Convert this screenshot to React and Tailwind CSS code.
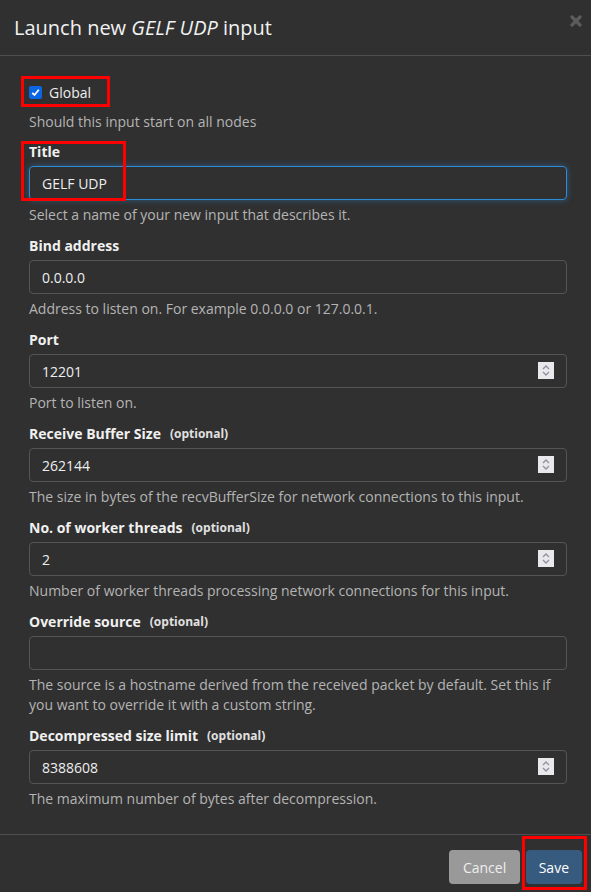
import React from "react"

const fields = [
  { label: "Bind address", value: "0.0.0.0", help: "Address to listen on. For example 0.0.0.0 or 127.0.0.1." },
  { label: "Port", value: "12201", spin: true, help: "Port to listen on." },
  {
    label: "Receive Buffer Size",
    optional: true,
    value: "262144",
    spin: true,
    help: "The size in bytes of the recvBufferSize for network connections to this input.",
  },
  {
    label: "No. of worker threads",
    optional: true,
    value: "2",
    spin: true,
    help: "Number of worker threads processing network connections for this input.",
  },
  {
    label: "Override source",
    optional: true,
    value: "",
    help: "The source is a hostname derived from the received packet by default. Set this if you want to override it with a custom string.",
  },
  {
    label: "Decompressed size limit",
    optional: true,
    value: "8388608",
    spin: true,
    help: "The maximum number of bytes after decompression.",
  },
]

const Spinner = () => (
  <span className="absolute right-[13px] top-[8px] flex h-[17px] w-[16px] items-center justify-center bg-[#e9e9ed]">
    <svg width="10" height="13" viewBox="0 0 10 13" fill="none" stroke="#8f8f9d" strokeWidth="1.3">
      <path d="M2 5 L5 2 L8 5" />
      <path d="M2 8 L5 11 L8 8" />
    </svg>
  </span>
)

const Field = ({ label, optional, value, spin, help, focused }) => (
  <div className="mb-[11px]">
    <div className="mb-[4px] flex items-center text-[14px] font-bold leading-[20px] text-[#f0f0f0]">
      {label}
      {optional && <span className="ml-[9px] text-[12px] font-bold text-[#e0e0e0]">(optional)</span>}
    </div>
    <div className="relative">
      <div
        className={
          focused
            ? "flex h-[34px] items-center rounded-[4px] border border-[#2e8bd6] px-[12px] text-[14px] text-[#eee] shadow-[0_0_6px_rgba(46,139,214,0.5)]"
            : "flex h-[34px] items-center rounded-[4px] border border-[#555] px-[12px] text-[14px] text-[#eee]"
        }
      >
        {value}
      </div>
      {spin && <Spinner />}
    </div>
    <p className="mt-[5px] text-[14px] leading-[20px] text-[#b4b4b4]">{help}</p>
  </div>
)

export default function App() {
  return (
    <div className="relative min-h-[892px] bg-[#303030] font-['Open_Sans',sans-serif]">
      <div className="flex h-[56px] items-center justify-between border-b border-[#4f4f4f] pl-[14px] pr-[9px]">
        <h1 className="text-[20px] leading-[28px] text-[#f2f2f2]">
          Launch new <em>GELF UDP</em> input
        </h1>
        <svg className="-mt-[13px]" width="12" height="12" viewBox="0 0 12 12" stroke="#5c5c5c" strokeWidth="3.2" strokeLinecap="round">
          <path d="M2 2 L10 10 M10 2 L2 10" />
        </svg>
      </div>

      <div className="pl-[29px] pr-[24px] pt-[26px] pb-[14px]">
        <label className="flex h-[20px] items-center gap-[7px] text-[14px] text-[#eee]">
          <span className="flex h-[13px] w-[13px] items-center justify-center rounded-[2px] bg-[#0b66e4]">
            <svg width="9" height="9" viewBox="0 0 9 9" fill="none" stroke="white" strokeWidth="1.8">
              <path d="M1.2 4.8 L3.5 7 L7.8 1.8" />
            </svg>
          </span>
          Global
        </label>
        <p className="mb-[10px] mt-[10px] text-[14px] leading-[20px] text-[#b4b4b4]">Should this input start on all nodes</p>

        <Field label="Title" value="GELF UDP" focused help="Select a name of your new input that describes it." />
        {fields.map((f) => (
          <Field key={f.label} {...f} />
        ))}
      </div>

      <div className="flex justify-end gap-[6px] border-t border-[#4f4f4f] pb-[15px] pr-[9px] pt-[15px]">
        <button className="h-[34px] rounded-[4px] bg-[#999] px-[13.5px] text-[14px] text-[#eee]">Cancel</button>
        <button className="h-[34px] rounded-[4px] bg-[#375a7f] px-[13px] text-[14px] text-white">Save</button>
      </div>

      <div className="pointer-events-none absolute left-[21px] top-[76px] h-[31px] w-[89px] border-[3px] border-[#ff0000]" />
      <div className="pointer-events-none absolute left-[21px] top-[141px] h-[60px] w-[105px] border-[3px] border-[#ff0000]" />
      <div className="pointer-events-none absolute left-[522px] top-[836px] h-[54px] w-[65px] border-[3px] border-[#ff0000]" />
    </div>
  )
}
